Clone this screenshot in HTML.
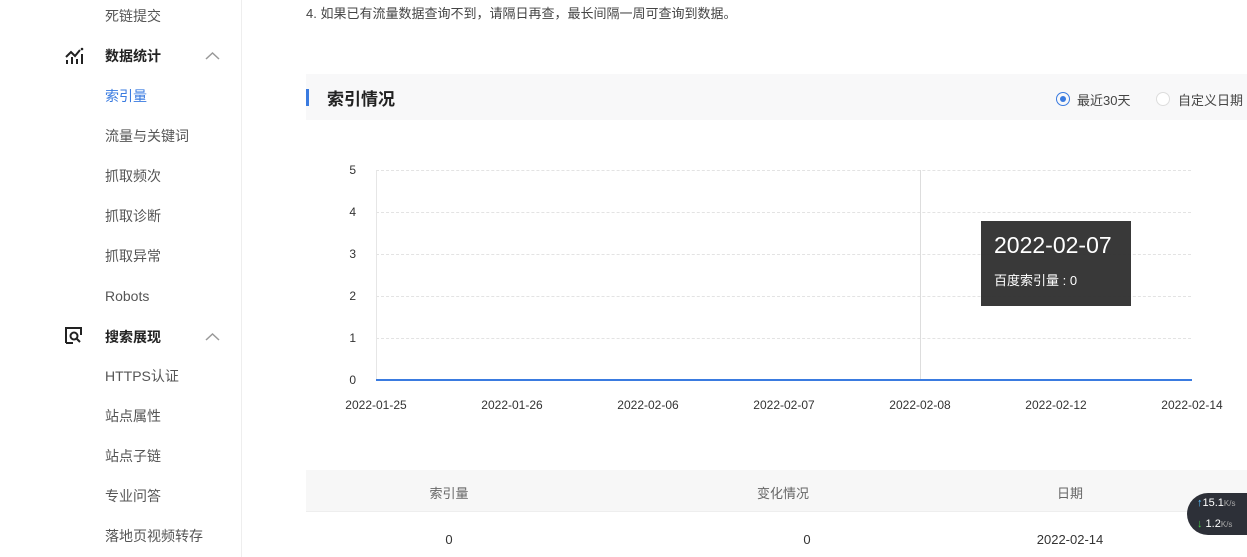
<!DOCTYPE html>
<html><head><meta charset="utf-8"><style>
*{margin:0;padding:0;box-sizing:border-box}
body{width:1247px;height:557px;overflow:hidden;background:#fff;font-family:"Liberation Sans","Noto Sans CJK SC",sans-serif;position:relative;color:#333}
.a{position:absolute;white-space:nowrap}
.side{position:absolute;left:0;top:0;width:242px;height:557px;border-right:1px solid #eee}
.it{position:absolute;left:105px;font-size:14px;color:#555;line-height:20px}
.hd{position:absolute;left:105px;font-size:14px;font-weight:bold;color:#222;line-height:20px}
.yl{position:absolute;left:340px;width:16px;text-align:right;font-size:12px;color:#333}
.gl{position:absolute;left:376px;width:815px;border-top:1px dashed #e3e3e3}
.xl{position:absolute;font-size:12px;color:#333;width:80px;text-align:center}
</style></head><body>
<div class="side">
<div class="it" style="top:6px">死链提交</div>
<svg class="a" style="left:64px;top:47px" width="20" height="18" viewBox="0 0 20 18"><path d="M2 10 L7 5 L11 9 L16 3" stroke="#222" stroke-width="2" fill="none"/><path d="M3 13v4M8 10v7M13 12v5M18 7v10" stroke="#222" stroke-width="2"/><circle cx="18" cy="2" r="1.3" fill="#222"/></svg>
<div class="hd" style="top:46px">数据统计</div>
<svg class="a" style="left:205px;top:51px" width="15" height="10"><path d="M1 8 L7.5 2 L14 8" stroke="#999" stroke-width="1.5" fill="none"/></svg>
<div class="it" style="top:86px;color:#3a7be0">索引量</div>
<div class="it" style="top:126px">流量与关键词</div>
<div class="it" style="top:166px">抓取频次</div>
<div class="it" style="top:206px">抓取诊断</div>
<div class="it" style="top:246px">抓取异常</div>
<div class="it" style="top:286px">Robots</div>
<svg class="a" style="left:64px;top:326px" width="20" height="20" viewBox="0 0 20 20"><path d="M2 17 V2 H17 V9" stroke="#222" stroke-width="2" fill="none"/><path d="M2 17 H9" stroke="#222" stroke-width="2"/><circle cx="10" cy="10" r="3.5" stroke="#222" stroke-width="2" fill="none"/><path d="M12.5 12.5 L16 16" stroke="#222" stroke-width="2"/></svg>
<div class="hd" style="top:327px">搜索展现</div>
<svg class="a" style="left:205px;top:332px" width="15" height="10"><path d="M1 8 L7.5 2 L14 8" stroke="#999" stroke-width="1.5" fill="none"/></svg>
<div class="it" style="top:366px">HTTPS认证</div>
<div class="it" style="top:406px">站点属性</div>
<div class="it" style="top:446px">站点子链</div>
<div class="it" style="top:486px">专业问答</div>
<div class="it" style="top:526px">落地页视频转存</div>
</div>
<div class="a" style="left:306px;top:3px;font-size:13px;color:#444">4. 如果已有流量数据查询不到，请隔日再查，最长间隔一周可查询到数据。</div>
<div class="a" style="left:306px;top:74px;width:941px;height:46px;background:#f8f8f9"></div>
<div class="a" style="left:306px;top:89px;width:3px;height:17px;background:#3a7be0"></div>
<div class="a" style="left:327px;top:85px;font-size:17px;font-weight:bold;color:#222">索引情况</div>
<div class="a" style="left:1056px;top:92px;width:14px;height:14px;border:1px solid #3a7be0;border-radius:50%"></div>
<div class="a" style="left:1060px;top:96px;width:6px;height:6px;background:#3a7be0;border-radius:50%"></div>
<div class="a" style="left:1077px;top:90px;font-size:13px;color:#444">最近30天</div>
<div class="a" style="left:1156px;top:92px;width:14px;height:14px;border:1px solid #ddd;border-radius:50%;background:#fff"></div>
<div class="a" style="left:1178px;top:90px;font-size:13px;color:#444">自定义日期</div>
<div class="gl" style="top:170px"></div><div class="gl" style="top:212px"></div><div class="gl" style="top:254px"></div><div class="gl" style="top:296px"></div><div class="gl" style="top:338px"></div>
<div class="a" style="left:376px;top:170px;width:1px;height:210px;background:#e6e6e6"></div>
<div class="a" style="left:920px;top:170px;width:1px;height:210px;background:#ddd"></div>
<div class="a" style="left:376px;top:379px;width:816px;height:2px;background:#3a7be0"></div>
<div class="yl" style="top:163px">5</div><div class="yl" style="top:205px">4</div><div class="yl" style="top:247px">3</div><div class="yl" style="top:289px">2</div><div class="yl" style="top:331px">1</div><div class="yl" style="top:373px">0</div>
<div class="xl" style="left:336px;top:398px">2022-01-25</div>
<div class="xl" style="left:472px;top:398px">2022-01-26</div>
<div class="xl" style="left:608px;top:398px">2022-02-06</div>
<div class="xl" style="left:744px;top:398px">2022-02-07</div>
<div class="xl" style="left:880px;top:398px">2022-02-08</div>
<div class="xl" style="left:1016px;top:398px">2022-02-12</div>
<div class="xl" style="left:1152px;top:398px">2022-02-14</div>
<div class="a" style="left:981px;top:221px;width:150px;height:85px;background:#333;opacity:.97"></div>
<div class="a" style="left:994px;top:232px;font-size:23px;color:#fff">2022-02-07</div>
<div class="a" style="left:994px;top:270px;font-size:13px;color:#fff">百度索引量 : 0</div>
<div class="a" style="left:306px;top:470px;width:941px;height:41px;background:#f7f7f7"></div>
<div class="a" style="left:306px;top:511px;width:941px;height:1px;background:#eee"></div>
<div class="a" style="left:409px;top:483px;width:80px;text-align:center;font-size:13px;color:#666">索引量</div>
<div class="a" style="left:733px;top:483px;width:100px;text-align:center;font-size:13px;color:#666">变化情况</div>
<div class="a" style="left:1030px;top:483px;width:80px;text-align:center;font-size:13px;color:#666">日期</div>
<div class="a" style="left:409px;top:532px;width:80px;text-align:center;font-size:13px">0</div>
<div class="a" style="left:767px;top:532px;width:80px;text-align:center;font-size:13px">0</div>
<div class="a" style="left:1020px;top:532px;width:100px;text-align:center;font-size:13px">2022-02-14</div>
<div class="a" style="left:1187px;top:493px;width:70px;height:42px;background:#2d3038;border-radius:21px 0 0 21px"></div>
<div class="a" style="left:1197px;top:497px;font-size:11px;color:#fff"><span style="color:#5bc0ff">↑</span>15.1<span style="font-size:8px;color:#aaa">K/s</span></div>
<div class="a" style="left:1197px;top:518px;font-size:11px;color:#fff"><span style="color:#4c4">↓</span> 1.2<span style="font-size:8px;color:#aaa">K/s</span></div>
</body></html>
